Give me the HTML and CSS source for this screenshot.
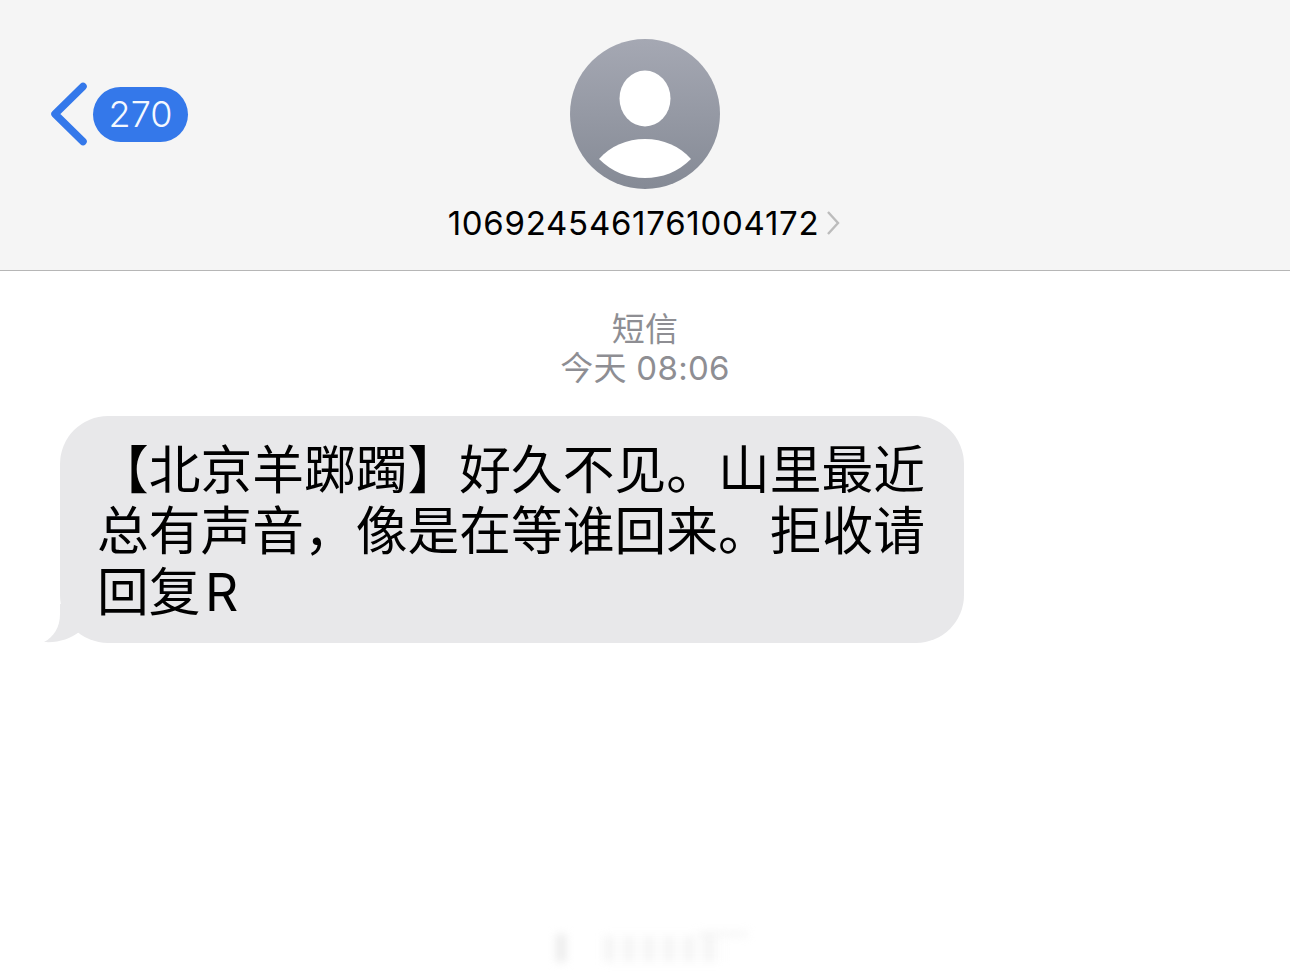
FILE: index.html
```html
<!DOCTYPE html>
<html lang="zh-CN">

<head>
  <meta charset="UTF-8">
  <meta name="viewport" content="width=device-width, initial-scale=1.0">
  <link rel="stylesheet" href="styles.css">
  <title>短信</title>
</head>

<body>
  <header class="nav">
    <div class="back">
      <svg class="back-icon" width="38" height="64" viewBox="0 0 38 64">
        <path d="M33 4.5 L5 32 L33 59.5" fill="none" stroke="#3478ea" stroke-width="7.5" stroke-linecap="round" stroke-linejoin="round"/>
      </svg>
      <span class="badge">270</span>
    </div>
    <div class="contact">
      <svg class="avatar" width="150" height="150" viewBox="0 0 150 150">
        <defs>
          <linearGradient id="avatarFill" x1="0" y1="0" x2="0" y2="1">
            <stop offset="0" stop-color="#a5a8b3"/>
            <stop offset="1" stop-color="#858a95"/>
          </linearGradient>
        </defs>
        <circle cx="75" cy="75" r="75" fill="url(#avatarFill)"/>
        <ellipse cx="75" cy="59.5" rx="25.5" ry="28" fill="#fff"/>
        <path d="M29 120 C40 107 57 100 75 100 C93 100 110 107 121 120 C108 133 92 139 75 139 C58 139 42 133 29 120 Z" fill="#fff"/>
      </svg>
      <div class="number">
        <span>1069245461761004172</span>
        <svg class="chevron" width="14" height="26" viewBox="0 0 14 26">
          <path d="M2 2 L12 13 L2 24" fill="none" stroke="#bcbcbc" stroke-width="2.4"/>
        </svg>
      </div>
    </div>
  </header>

  <main class="thread">
    <div class="stamp">
      <div class="stamp-kind">短信</div>
      <div class="stamp-time">今天 08:06</div>
    </div>
    <div class="bubble">
      <svg class="tail" width="40" height="40" viewBox="0 0 40 40">
        <path d="M16 10 C16 23 10 33 0 38 C14 39 26 35 35 28 L40 0 L16 0 Z" fill="#e8e8ea"/>
      </svg>
      <p class="bubble-text">【北京羊踯躅】好久不见。山里最近总有声音，像是在等谁回来。拒收请回复 R</p>
    </div>
  </main>

  <div class="watermark">
    <span class="wm-a"></span>
    <span class="wm-b"></span>
    <span class="wm-d"></span>
  </div>
</body>

</html>
```

FILE: styles.css
```css
body {
  margin: 0;
  height: 976px;
  overflow: hidden;
  position: relative;
  background-color: #fff;
  font-family: "Inter", "Noto Sans CJK SC", sans-serif;
  color: #000;
}

.nav {
  height: 270px;
  background-color: #f5f5f5;
  border-bottom: 1px solid #b6b6b6;
  display: grid;
  grid-template-columns: 1fr auto 1fr;
}

.back {
  display: flex;
  align-items: center;
  align-self: start;
  gap: 5px;
  margin-top: 82px;
  padding-left: 50px;
}

.badge {
  width: 95px;
  height: 55px;
  border-radius: 28px;
  background-color: #3478ea;
  color: #f4f8ff;
  font-size: 36px;
  font-weight: 300;
  line-height: 55px;
  text-align: center;
}

.contact {
  grid-column: 2;
  display: flex;
  flex-direction: column;
  align-items: center;
  padding-top: 39px;
}

.avatar {
  display: block;
}

.number {
  display: flex;
  align-items: center;
  gap: 7px;
  margin-top: 14px;
  margin-right: 2px;
  font-size: 33px;
  letter-spacing: 0.72px;
  line-height: 40px;
}

.thread {
  display: flex;
  flex-direction: column;
  align-items: flex-start;
}

.stamp {
  align-self: center;
  margin-top: 39px;
  text-align: center;
  color: #8e8e93;
  font-size: 33px;
  letter-spacing: 0.3px;
  line-height: 39px;
}

.bubble {
  position: relative;
  width: 904px;
  margin-top: 28px;
  margin-left: 60px;
  box-sizing: border-box;
  padding: 24px 38px 20px 37px;
  border-radius: 48px;
  background-color: #e8e8ea;
}

.tail {
  position: absolute;
  left: -16px;
  bottom: -1px;
}

.bubble-text {
  position: relative;
  margin: 0;
  font-size: 51.75px;
  line-height: 61px;
  word-spacing: -10px;
}

.watermark {
  position: absolute;
  left: 548px;
  top: 928px;
  width: 200px;
  height: 36px;
  filter: blur(4px);
}

.watermark span {
  position: absolute;
}

.wm-a {
  left: 8px;
  top: 6px;
  width: 10px;
  height: 28px;
  background-color: #ececec;
}

.wm-b {
  left: 56px;
  top: 8px;
  width: 120px;
  height: 26px;
  opacity: 0.35;
  background: repeating-linear-gradient(90deg, #e0e0e0 0 10px, #fafafa 10px 20px);
}

.wm-d {
  left: 150px;
  top: 4px;
  width: 50px;
  height: 4px;
  opacity: 0.4;
  background-color: #e0e0e0;
}
```
